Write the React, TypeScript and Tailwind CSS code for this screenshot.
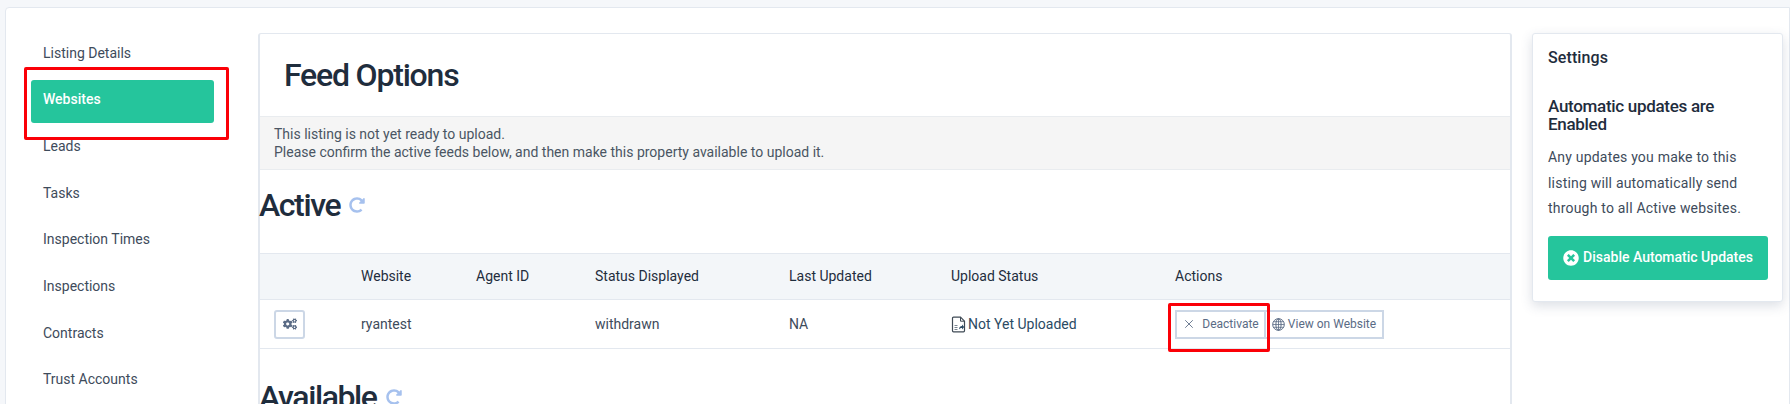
import { X } from 'lucide-react';
import { FaCogs, FaRedoAlt, FaTimesCircle } from 'react-icons/fa';

const navItems = [
  'Listing Details',
  'Websites',
  'Leads',
  'Tasks',
  'Inspection Times',
  'Inspections',
  'Contracts',
  'Trust Accounts',
];

const columns = [
  { label: '', width: 'w-[101px]' },
  { label: 'Website', width: 'w-[115px]' },
  { label: 'Agent ID', width: 'w-[119px]' },
  { label: 'Status Displayed', width: 'w-[194px]' },
  { label: 'Last Updated', width: 'w-[162px]' },
  { label: 'Upload Status', width: 'w-[224px]' },
  { label: 'Actions', width: 'flex-1' },
];

function SectionHeading({ title }: { title: string }) {
  return (
    <div className="-ml-[1px] flex items-center gap-[9px]">
      <h2 className="text-[32px] font-medium leading-[40px] tracking-[-1.4px] text-[#1f2d3d]">{title}</h2>
      <FaRedoAlt className="h-[16px] w-[16px] text-[#a6c1ee]" />
    </div>
  );
}

function FileStatusIcon() {
  return (
    <svg viewBox="0 0 15 17" className="h-[17px] w-[15px]" fill="none">
      <path d="M1.5 2.2c0-.6.4-1 1-1h7l4 4v9.6c0 .6-.4 1-1 1h-10c-.6 0-1-.4-1-1z" stroke="#3f4a55" strokeWidth="1.2" />
      <path d="M9.5 1.2v4h4" stroke="#3f4a55" strokeWidth="1" />
      <path d="M3.5 9.5h3M3.5 11.5h3M3.5 13.5h3" stroke="#6b7785" strokeWidth="0.9" />
      <path d="M8 13.5c0-2.2 1.2-3.4 3-3.5V8.5l2.2 2.6-2.2 2.4v-1.6c-1 0-2.2.4-3 1.6z" fill="#2b4a63" />
    </svg>
  );
}

function GlobeIcon() {
  return (
    <svg viewBox="0 0 13 13" className="h-[13px] w-[13px]" fill="none" stroke="#5a6b85" strokeWidth="1">
      <circle cx="6.5" cy="6.5" r="5.8" />
      <ellipse cx="6.5" cy="6.5" rx="2.6" ry="5.8" />
      <path d="M6.5.7v11.6M.7 6.5h11.6M1.5 3.7h10M1.5 9.3h10" strokeWidth="0.8" />
    </svg>
  );
}

export default function App() {
  return (
    <div className="h-[404px] overflow-hidden bg-[#f5f7fa] pl-[5px] pt-[7px] font-['Roboto',sans-serif] text-[14px] text-[#3e4b5b]">
      <div className="relative flex h-[420px] items-start rounded-tl-[4px] border border-[#e3e8ef] bg-white pl-[25px] pt-[25px]">
        {/* Sidebar */}
        <nav className="flex w-[227px] flex-col gap-[3.7px] pr-[44px]">
          {navItems.map((item) => (
            <div
              key={item}
              className={
                item === 'Websites'
                  ? 'flex h-[43px] items-center rounded-[3px] bg-[#25c59c] px-[12px] pb-[3px] font-medium text-white'
                  : 'flex h-[43px] items-center px-[12px] pb-[3px]'
              }
            >
              {item}
            </div>
          ))}
        </nav>

        {/* Feed options */}
        <main className="h-[400px] w-[1254px] rounded-t-[3px] border-2 border-b-0 border-[#e3e8ef] border-t-[1px]">
          <h1 className="pl-[24px] pt-[21px] pb-[21px] text-[32px] font-medium leading-[40px] tracking-[-1.2px] text-[#1f2d3d]">
            Feed Options
          </h1>
          <div className="h-[54px] border-y border-[#e9ecef] bg-[#f5f5f5] px-[14px] pt-[8px] leading-[18px] text-[#4a5563]">
            <p>This listing is not yet ready to upload.</p>
            <p>Please confirm the active feeds below, and then make this property available to upload it.</p>
          </div>
          <div className="pt-[15px]">
            <SectionHeading title="Active" />
          </div>

          <div className="mt-[28px] border-y border-[#e3e8ef]">
            <div className="flex h-[46px] items-center border-b border-[#e3e8ef] bg-[#f3f6f9] text-[#1f2d3d]">
              {columns.map((column) => (
                <div key={column.label} className={column.width}>
                  {column.label}
                </div>
              ))}
            </div>
            <div className="flex h-[48px] items-center">
              <div className="w-[101px] pl-[14px]">
                <button className="flex h-[29px] w-[31px] items-center justify-center rounded-[3px] border-2 border-[#ccd7e6] text-[#5a6b85]">
                  <FaCogs className="h-[14px] w-[14px]" />
                </button>
              </div>
              <div className="w-[115px]">ryantest</div>
              <div className="w-[119px]" />
              <div className="w-[194px]">withdrawn</div>
              <div className="w-[162px]">NA</div>
              <div className="flex w-[224px] items-center gap-[2px] text-[#2b4a63]">
                <FileStatusIcon />
                Not Yet Uploaded
              </div>
              <div className="flex flex-1 items-center text-[12px] text-[#5a6b85]">
                <button className="flex h-[29px] w-[91px] items-center justify-center gap-[6px] border-2 border-[#ccd7e6]">
                  <X className="h-[14px] w-[14px]" strokeWidth={1.5} />
                  Deactivate
                </button>
                <button className="flex h-[29px] w-[118px] items-center justify-center gap-[3px] border-2 border-l-0 border-[#ccd7e6]">
                  <GlobeIcon />
                  View on Website
                </button>
              </div>
            </div>
          </div>

          <div className="pt-[28px]">
            <SectionHeading title="Available" />
          </div>
        </main>

        {/* Settings */}
        <aside className="ml-[20px] h-[269px] w-[251px] rounded-[3px] border border-[#e3e8ef] bg-white px-[15px] pt-[13px] shadow-[0_4px_12px_rgba(60,80,110,0.18)]">
          <h3 className="text-[16px] font-medium leading-[22px] tracking-[0.1px] text-[#1f2d3d]">Settings</h3>
          <h4 className="mt-[28px] text-[17px] font-medium leading-[18px] tracking-[-0.3px] text-[#1f2d3d]">
            Automatic updates are Enabled
          </h4>
          <p className="mt-[12px] text-[14px] leading-[25.5px] tracking-[0.2px] text-[#3e4b5b]">
            Any updates you make to this listing will automatically send through to all Active websites.
          </p>
          <button className="mt-[14px] flex h-[44px] w-[220px] items-center justify-center gap-[4px] rounded-[3px] bg-[#25c59c] text-[14px] font-medium text-white">
            <FaTimesCircle className="h-[16px] w-[16px]" />
            Disable Automatic Updates
          </button>
        </aside>

        {/* Red annotation boxes drawn over the screenshot */}
        <div className="absolute left-[18px] top-[59px] h-[73px] w-[205px] rounded-[2px] border-[3px] border-[#fb0007]" />
        <div className="absolute left-[1162px] top-[295px] h-[49px] w-[102px] rounded-[2px] border-[3px] border-[#fb0007]" />
      </div>
    </div>
  );
}
